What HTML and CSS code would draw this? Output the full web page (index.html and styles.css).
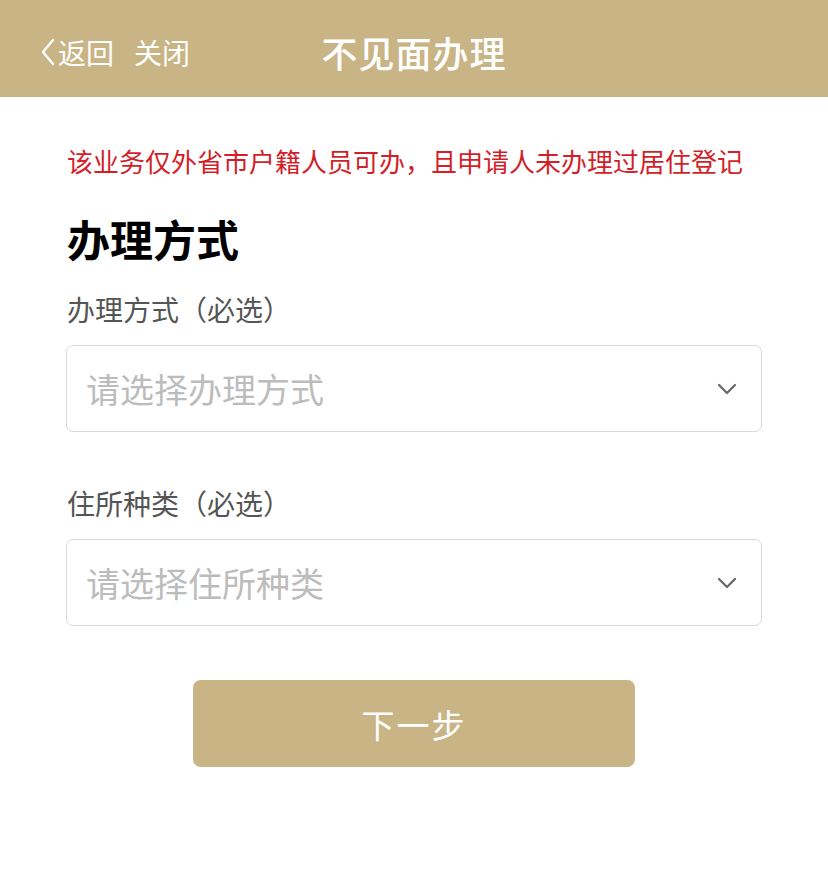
FILE: index.html
```html
<!DOCTYPE html>
<html lang="zh-CN">
<head>
  <meta charset="UTF-8">
  <title>不见面办理</title>
  <meta name="viewport" content="width=device-width, initial-scale=1.0">
  <link rel="stylesheet" href="styles.css">
</head>
<body>

  <header class="top-bar">
    <div class="nav-left">
      <span class="nav-back">
        <svg class="back-icon" width="16" height="28" viewBox="0 0 16 28">
          <path d="M13 2 L3 14 L13 26" fill="none" stroke="#fff" stroke-width="2.4" stroke-linecap="round" stroke-linejoin="round"/>
        </svg>返回
      </span>
      <span class="nav-close">关闭</span>
    </div>
    <h1 class="top-title">不见面办理</h1>
    <div></div>
  </header>

  <main class="content">
    <p class="notice">该业务仅外省市户籍人员可办，且申请人未办理过居住登记</p>

    <h2 class="section-title">办理方式</h2>

    <div class="field">
      <div class="field-label">办理方式（必选）</div>
      <div class="select-box">
        <span class="placeholder">请选择办理方式</span>
        <svg class="arrow" width="20" height="12" viewBox="0 0 20 12">
          <path d="M2 2 L10 10 L18 2" fill="none" stroke="#666" stroke-width="2.2" stroke-linecap="round" stroke-linejoin="round"/>
        </svg>
      </div>
    </div>

    <div class="field field-second">
      <div class="field-label">住所种类（必选）</div>
      <div class="select-box">
        <span class="placeholder">请选择住所种类</span>
        <svg class="arrow" width="20" height="12" viewBox="0 0 20 12">
          <path d="M2 2 L10 10 L18 2" fill="none" stroke="#666" stroke-width="2.2" stroke-linecap="round" stroke-linejoin="round"/>
        </svg>
      </div>
    </div>

    <div class="actions">
      <button class="next-btn">下一步</button>
    </div>
  </main>

</body>
</html>
```

FILE: styles.css
```css
body {
  margin: 0;
  background: #fff;
  font-family: "Noto Sans CJK SC", "Noto Sans", sans-serif;
  color: #333;
}

.top-bar {
  height: 97px;
  background: #c9b485;
  display: grid;
  grid-template-columns: 1fr auto 1fr;
  align-items: center;
  color: #fff;
}

.nav-left {
  display: flex;
  align-items: center;
  gap: 20px;
  padding-left: 40px;
  font-size: 28px;
  padding-top: 6px;
}

.nav-back {
  display: flex;
  align-items: center;
}

.back-icon {
  margin-right: 2px;
}

.top-title {
  margin: 0;
  font-size: 36px;
  font-weight: 500;
  letter-spacing: 1px;
  padding-top: 6px;
}

.content {
  padding: 0 67px;
}

.notice {
  margin: 46px 0 0;
  font-size: 26px;
  line-height: 36px;
  color: #d21f2a;
  white-space: nowrap;
}

.section-title {
  margin: 34px 0 0;
  font-size: 43px;
  line-height: 50px;
  font-weight: 700;
  color: #000;
}

.field {
  margin-top: 26px;
}

.field-second {
  margin-top: 51px;
}

.field-label {
  font-size: 28px;
  line-height: 40px;
  color: #555;
  margin-bottom: 16px;
}

.select-box {
  height: 85px;
  border: 1px solid #d9d9d9;
  border-radius: 7px;
  margin-left: -1px;
  margin-right: -1px;
  display: flex;
  align-items: center;
  justify-content: space-between;
  padding: 0 24px 0 19px;
}

.placeholder {
  font-size: 34px;
  color: #bcbcbc;
}

.arrow {
  display: block;
}

.actions {
  display: flex;
  justify-content: center;
  margin-top: 54px;
}

.next-btn {
  width: 442px;
  height: 87px;
  border: none;
  border-radius: 8px;
  background: #c9b485;
  color: #fff;
  font-family: inherit;
  font-size: 33px;
  letter-spacing: 2px;
}
```
